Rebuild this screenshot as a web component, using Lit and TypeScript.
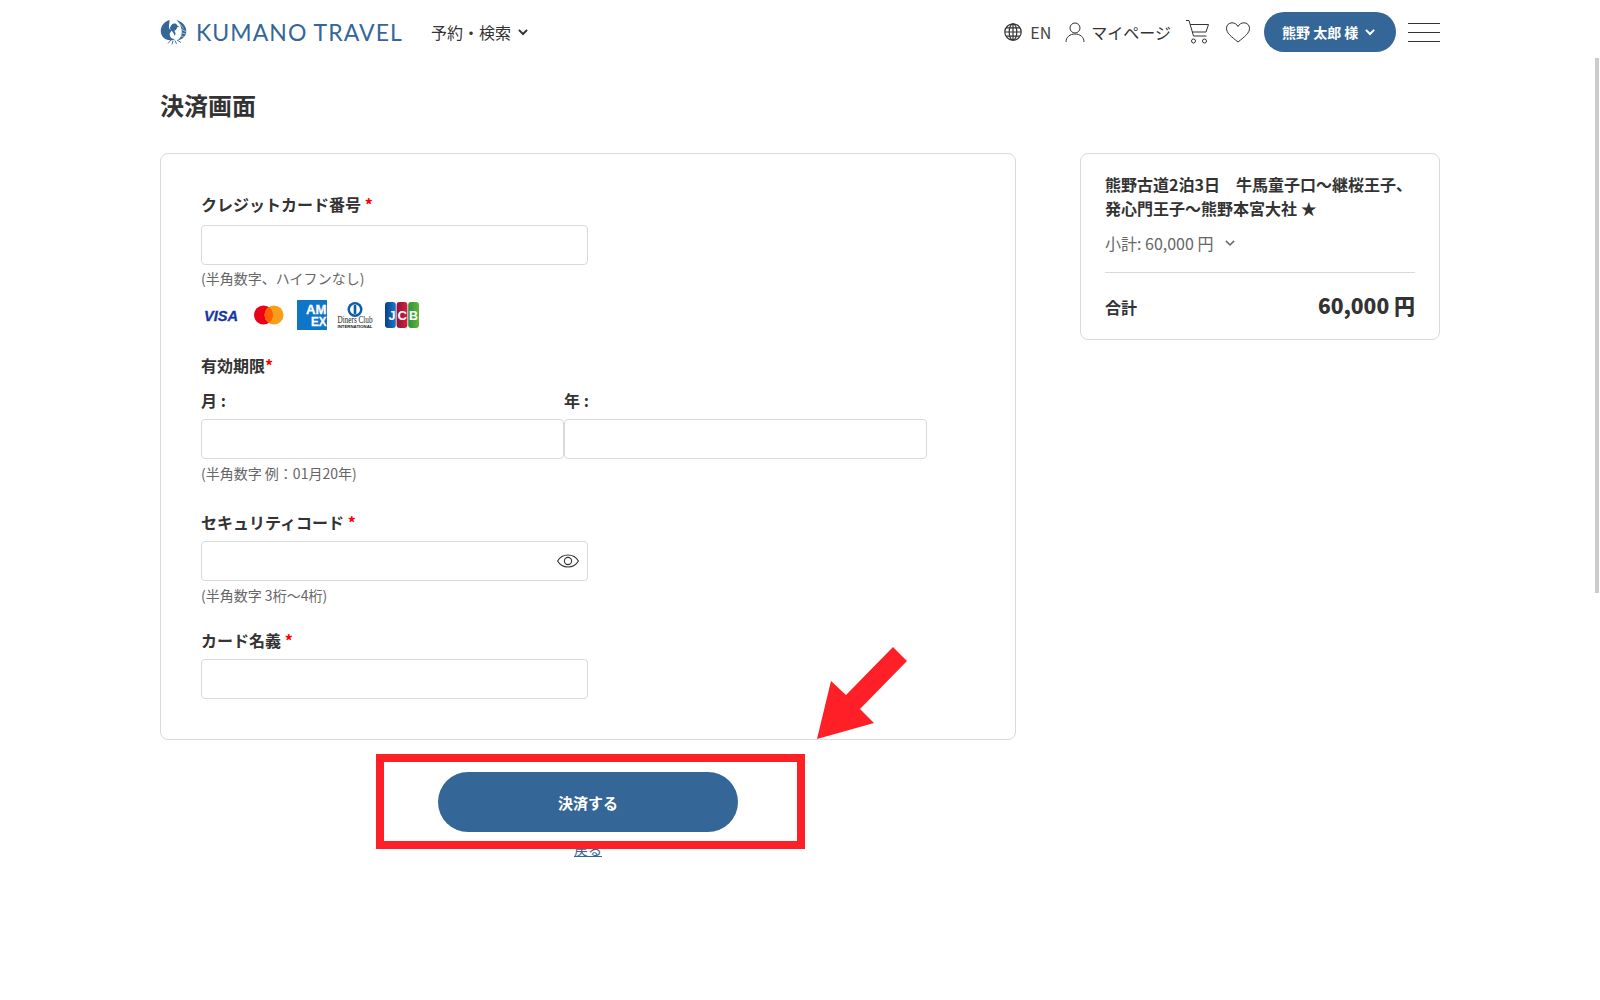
import { LitElement, css, html, svg } from 'lit';
import { customElement } from 'lit/decorators.js';

const chevron = () => html`<svg width="14" height="14" viewBox="0 0 12 12" fill="none" stroke="currentColor" stroke-width="1.7"><path d="M2.500 4.200l3.500 3.500 3.500-3.500" /></svg>`;

const globe = svg`<circle cx="9" cy="9" r="8.2"/><ellipse cx="9" cy="9" rx="3.8" ry="8.2"/><path d="M9 .8v16.400M.8 9h16.400M2 4.800h14M2 13.200h14"/>`;

@customElement('app-root')
export class AppRoot extends LitElement {
  static override styles = css`
    :host {
      display: block;
      position: relative;
      height: 1000px;
      overflow: hidden;
      background: #fff;
      color: #333;
      font-family: 'Noto Sans CJK JP', 'Noto Sans', sans-serif;
      font-size: 16px;
      line-height: 24px;
    }

    .wrap {
      width: 1280px;
      margin: 0 auto;
    }

    header {
      display: flex;
      align-items: center;
      height: 64px;
    }

    .logo {
      display: flex;
      align-items: center;
      gap: 9px;
      color: #356698;
      font-family: 'Lato', sans-serif;
      font-weight: 400;
      font-size: 23px;
      letter-spacing: 1.05px;
      white-space: nowrap;
    }

    .logo svg {
      margin-top: 1px;
    }

    .nav {
      display: flex;
      align-items: center;
      gap: 5px;
      margin-left: 28px;
    }

    .tools {
      display: flex;
      align-items: center;
      margin-left: auto;
    }

    .tool {
      display: flex;
      align-items: center;
    }

    .tool svg {
      fill: none;
      stroke: #333;
      stroke-width: 1;
    }

    .lang {
      color: #444;
      gap: 8px;
      margin-right: 14px;
    }

    .lang svg {
      stroke-width: 1.2;
    }

    .my {
      gap: 6px;
      margin-right: 15px;
    }

    .cart {
      margin-right: 17px;
    }

    .heart {
      margin-right: 14px;
    }

    .user {
      display: flex;
      align-items: center;
      gap: 5px;
      width: 132px;
      height: 40px;
      box-sizing: border-box;
      padding-left: 18px;
      border-radius: 20px;
      background: #356698;
      color: #fff;
      font-size: 14px;
      font-weight: 700;
      white-space: nowrap;
      margin-right: 12px;
    }

    .burger {
      display: flex;
      flex-direction: column;
      gap: 8px;
      width: 32px;
    }

    .burger span {
      height: 1px;
      background: #333;
    }

    h1 {
      margin: 23px 0 30px;
      font-size: 24px;
      line-height: 36px;
      font-weight: 700;
    }

    .columns {
      display: flex;
      justify-content: space-between;
      align-items: flex-start;
    }

    .left {
      width: 856px;
    }

    .card {
      box-sizing: border-box;
      border: 1px solid #d9d9d9;
      border-radius: 8px;
      background: #fff;
    }

    .form {
      padding: 40px;
    }

    label {
      display: block;
      line-height: 20px;
      padding-bottom: 4px;
      font-weight: 700;
    }

    label b {
      color: #f00;
      font-weight: 700;
    }

    .box {
      display: block;
      box-sizing: border-box;
      height: 40px;
      border: 1px solid #d9d9d9;
      border-radius: 4px;
      background: #fff;
    }

    .short {
      width: 387px;
    }

    .hint {
      font-size: 14px;
      line-height: 21px;
      color: #666;
    }

    .brands {
      display: flex;
      align-items: center;
      height: 30px;
      margin: 11px 0 25px;
    }

    .brands svg {
      overflow: visible;
    }

    .date {
      display: flex;
      width: 726px;
      margin-top: 11px;
    }

    .date > div {
      flex: 1;
    }

    .date .box {
      margin-top: 5px;
    }

    .pw {
      display: flex;
      align-items: center;
      justify-content: flex-end;
      padding-right: 8px;
    }

    .actions {
      display: flex;
      flex-direction: column;
      align-items: center;
      margin-top: 32px;
    }

    .pay {
      display: flex;
      align-items: center;
      justify-content: center;
      width: 300px;
      height: 60px;
      box-sizing: border-box;
      padding-top: 1px;
      border-radius: 30px;
      background: #356698;
      color: #fff;
      font-size: 15px;
      font-weight: 700;
    }

    .back {
      margin-top: 7px;
      font-size: 14px;
      line-height: 21px;
      color: #356698;
      text-decoration: underline;
    }

    .summary {
      width: 360px;
      padding: 18px 24px 15px;
    }

    .trip {
      font-weight: 700;
    }

    .sub {
      display: flex;
      align-items: center;
      gap: 10px;
      margin-top: 11px;
      padding-bottom: 17px;
      border-bottom: 1px solid #d9d9d9;
      color: #666;
    }

    .sub svg {
      stroke-width: 1.3;
    }

    .total {
      display: flex;
      align-items: center;
      justify-content: space-between;
      margin-top: 15px;
      font-weight: 700;
    }

    .total span {
      padding-top: 2px;
    }

    .total strong {
      font-size: 21px;
      line-height: 34px;
      padding-bottom: 2px;
    }

    /* annotation and scrollbar lie over the page */
    .mark {
      position: absolute;
      left: 376px;
      top: 754px;
      width: 429px;
      height: 95px;
      box-sizing: border-box;
      border: 8px solid #ff1f27;
    }

    .arrow {
      position: absolute;
      left: 810px;
      top: 640px;
    }

    .thumb {
      position: absolute;
      left: 1595px;
      top: 58px;
      width: 4px;
      height: 535px;
      background: #ccc;
    }
  `;

  private renderLogo() {
    return html`<svg width="27" height="27" viewBox="0 0 27 27" fill="#356698">
      <path d="M9.500 1C4 2.500.5 7.500.8 12.500c.3 5 4.200 8.500 9.200 8.800 2 .1 3.800-.4 5-1.300-3 .2-5-1.500-5.300-4-.2-2 1-3.500 2.500-4.500-1.800-.3-3.300-1.800-3.300-4 0-2.500 1-4.500.6-6.500z" />
      <path d="M16.500 1c5.500 1.500 10 6 9.800 11.500-.2 4.500-3.800 8-8.800 9 3-2.500 4.500-5.500 4.300-9C21.600 8 19.800 4 16.500 1z" />
      <path d="M10.500 8c.5-2.500 2.500-4 4.500-3.500 1.300.3 2 1.200 2.400 2.300l2 1-2.200.5c-.2 2-1.500 3-3 3.700 1.500 1 1.800 3 .5 5-.5-2.500-2-4.500-4-6-.5-1-.8-2-.7-3z" />
      <path fill="none" stroke="#356698" stroke-width=".9" d="M11 21l-3 3.500M13 21.500l-1 4M15 21.500l1.500 3.500M17 21l4 2.500" />
      <path fill="none" stroke="#fff" stroke-width=".6" d="M19.500 4.500l4 5M21.500 10.500l4.500 2M21.800 14l3.700.8M20.500 17l3 .5" />
    </svg>`;
  }

  private renderBrands() {
    return html`
      <svg width="38" height="18" viewBox="0 0 38 18" style="margin-left:2px">
        <text x="1" y="15" font-family="Liberation Sans" font-size="15" font-weight="700" font-style="italic" fill="#1434a8" stroke="#1434a8" stroke-width=".3" textLength="34" lengthAdjust="spacingAndGlyphs">VISA</text>
      </svg>
      <svg width="32" height="20" viewBox="0 0 32 20" style="margin-left:12px">
        <circle cx="10.500" cy="10" r="9.500" fill="#eb001b" />
        <circle cx="21" cy="10" r="9.500" fill="#f79e1b" />
        <path d="M15.750 2.100a9.500 9.500 0 0 1 0 15.800a9.500 9.500 0 0 1 0-15.800z" fill="#ff5f00" />
      </svg>
      <svg width="30" height="30" viewBox="0 0 30 30" style="margin-left:12px">
        <rect width="30" height="30" fill="#0f75c8" />
        <text x="9" y="14" font-family="Liberation Sans" font-size="13" font-weight="700" fill="#fff" stroke="#fff" stroke-width=".3" textLength="20.500" lengthAdjust="spacingAndGlyphs">AM</text>
        <text x="14" y="26" font-family="Liberation Sans" font-size="13" font-weight="700" fill="#fff" stroke="#fff" stroke-width=".3" textLength="15.500" lengthAdjust="spacingAndGlyphs">EX</text>
      </svg>
      <svg width="36" height="27" viewBox="0 0 36 27" style="margin-left:10px">
        <circle cx="18" cy="7.500" r="7.500" fill="#0b5ea8" />
        <circle cx="18" cy="7.500" r="5" fill="#fff" />
        <rect x="16.700" y="3" width="2.600" height="9" fill="#0b5ea8" />
        <text x=".5" y="21" font-family="Liberation Serif" font-size="9.500" fill="#222" textLength="35" lengthAdjust="spacingAndGlyphs">Diners Club</text>
        <text x=".5" y="26" font-family="Liberation Sans" font-size="3.600" font-weight="700" fill="#222" textLength="35" lengthAdjust="spacingAndGlyphs">INTERNATIONAL</text>
      </svg>
      <svg width="34" height="26" viewBox="0 0 34 26" style="margin-left:12px">
        <defs>
          <linearGradient id="jb"><stop offset="0" stop-color="#0a3f8c" /><stop offset="1" stop-color="#1a78c2" /></linearGradient>
          <linearGradient id="jr"><stop offset="0" stop-color="#8e1438" /><stop offset="1" stop-color="#d3203e" /></linearGradient>
          <linearGradient id="jg"><stop offset="0" stop-color="#2b8f3c" /><stop offset="1" stop-color="#62b53b" /></linearGradient>
        </defs>
        <rect width="10.800" height="26" rx="3" fill="url(#jb)" />
        <rect x="11.600" width="10.800" height="26" rx="3" fill="url(#jr)" />
        <rect x="23.200" width="10.800" height="26" rx="3" fill="url(#jg)" />
        <text x="3.500" y="18" font-family="Liberation Sans" font-size="12.500" font-weight="700" fill="#fff" textLength="7" lengthAdjust="spacingAndGlyphs">J</text>
        <text x="12.500" y="18" font-family="Liberation Sans" font-size="12.500" font-weight="700" fill="#fff" textLength="9.500" lengthAdjust="spacingAndGlyphs">C</text>
        <text x="24" y="18" font-family="Liberation Sans" font-size="12.500" font-weight="700" fill="#fff" textLength="9" lengthAdjust="spacingAndGlyphs">B</text>
      </svg>
    `;
  }

  override render() {
    return html`
      <div class="wrap">
        <header>
          <div class="logo">${this.renderLogo()}<span>KUMANO TRAVEL</span></div>
          <div class="nav"><span>予約・検索</span>${chevron()}</div>
          <div class="tools">
            <div class="tool lang">
              <svg width="18" height="18" viewBox="0 0 18 18">${globe}</svg><span>EN</span>
            </div>
            <div class="tool my">
              <svg width="20" height="20" viewBox="0 0 20 20"><circle cx="10" cy="6" r="5" /><path d="M1 20c0-5 4-8 9-8s9 3 9 8" /></svg>
              <span>マイページ</span>
            </div>
            <div class="tool cart">
              <svg width="23" height="24" viewBox="0 0 23 24"><path d="M0 .5h3L7.500 16h13M4.200 4.500h18.300L20 12H6.300" /><circle cx="7.500" cy="21" r="2" /><circle cx="18.500" cy="21" r="2" /></svg>
            </div>
            <div class="tool heart">
              <svg width="24" height="21" viewBox="0 0 24 21"><path d="M12 20C5 14.500.5 11 .5 6.300.5 3 3 .8 6 .8c2.500 0 4.800 1.400 6 3.700C13.200 2.200 15.500.8 18 .8c3 0 5.500 2.200 5.500 5.500C23.500 11 19 14.500 12 20z" /></svg>
            </div>
            <div class="user"><span>熊野 太郎 様</span>${chevron()}</div>
            <div class="burger"><span></span><span></span><span></span></div>
          </div>
        </header>

        <h1>決済画面</h1>

        <div class="columns">
          <div class="left">
            <div class="card form">
              <label style="margin-bottom:7px">クレジットカード番号 <b>*</b></label>
              <div class="box short"></div>
              <div class="hint" style="margin-top:3px">(半角数字、ハイフンなし)</div>
              <div class="brands">${this.renderBrands()}</div>

              <label>有効期限<b>*</b></label>
              <div class="date">
                <div><label>月 :</label><div class="box"></div></div>
                <div><label>年 :</label><div class="box"></div></div>
              </div>
              <div class="hint" style="margin-top:4px">(半角数字 例：01月20年)</div>

              <label style="margin:28px 0 5px">セキュリティコード <b>*</b></label>
              <div class="box short pw">
                <svg width="22" height="18" viewBox="0 0 22 18" fill="none" stroke="#333" stroke-width="1.100">
                  <path d="M.6 9C3 4.800 6.800 3 11 3s8 1.800 10.400 6C19 13.200 15.200 15 11 15S3 13.200.6 9z" /><circle cx="11" cy="9" r="3.600" />
                </svg>
              </div>
              <div class="hint" style="margin-top:4px">(半角数字 3桁〜4桁)</div>

              <label style="margin:24px 0 5px">カード名義 <b>*</b></label>
              <div class="box short"></div>
            </div>
            <div class="actions">
              <div class="pay">決済する</div>
              <a class="back">戻る</a>
            </div>
          </div>

          <aside class="card summary">
            <div class="trip">熊野古道2泊3日　牛馬童子口〜継桜王子、<br />発心門王子〜熊野本宮大社 ★</div>
            <div class="sub"><span>小計: 60,000 円</span>${chevron()}</div>
            <div class="total"><span>合計</span><strong>60,000 円</strong></div>
          </aside>
        </div>
      </div>

      <div class="mark"></div>
      <svg class="arrow" width="100" height="102" viewBox="810 640 100 102">
        <path fill="#ff1f27" d="M817 739L831 681L846 695L893 647L907 661L860 709L874 723z" />
      </svg>
      <div class="thumb"></div>
    `;
  }
}
